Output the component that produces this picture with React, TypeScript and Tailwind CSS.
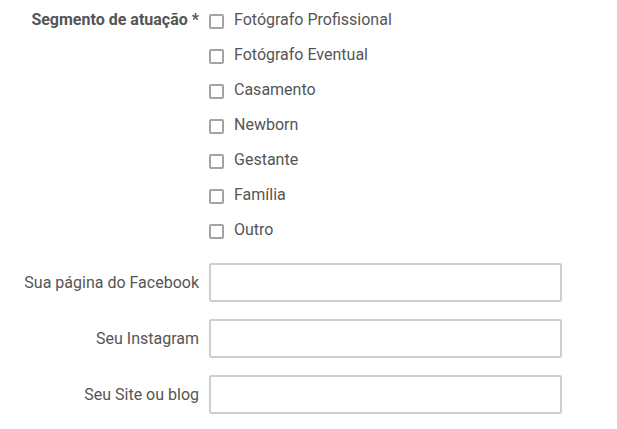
const options = [
  'Fotógrafo Profissional',
  'Fotógrafo Eventual',
  'Casamento',
  'Newborn',
  'Gestante',
  'Família',
  'Outro',
];

const fields = ['Sua página do Facebook', 'Seu Instagram', 'Seu Site ou blog'];

export default function App() {
  return (
    <div className="min-h-screen bg-white text-[16px] text-[#555] font-['Roboto',sans-serif]">
      <div className="flex pt-[2px]">
        <div className="w-[209px] shrink-0 pr-[10px] h-[35px] flex items-center justify-end font-bold">
          Segmento de atuação *
        </div>
        <div className="flex flex-col">
          {options.map((o) => (
            <label key={o} className="h-[35px] flex items-center gap-[10px]">
              <span className="w-[15px] h-[15px] mt-[4px] border-2 border-[#a3a3a3] rounded-[2px]" />
              <span>{o}</span>
            </label>
          ))}
        </div>
      </div>
      <div className="flex flex-col gap-[17px] mt-[16px]">
        {fields.map((f) => (
          <div key={f} className="flex items-center">
            <div className="w-[209px] shrink-0 pr-[10px] text-right">{f}</div>
            <div className="w-[353px] h-[39px] border-2 border-[#cfcfcf] rounded-[2px]" />
          </div>
        ))}
      </div>
    </div>
  );
}
